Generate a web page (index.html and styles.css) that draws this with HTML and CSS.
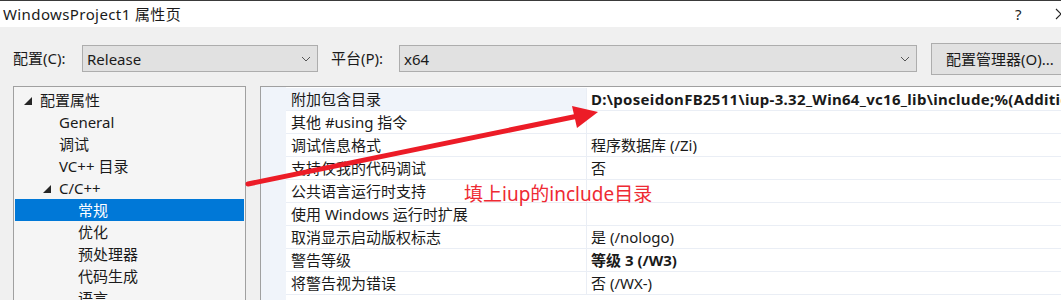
FILE: index.html
```html
<html>
<head>
<title>WindowsProject1 属性页</title>
<link rel="stylesheet" href="styles.css">
</head>
<body>
<div class="window">
  <div class="titlebar">
    <span class="title">WindowsProject1 属性页</span>
    <span class="help">?</span>
    <svg class="close" width="12" height="12" viewBox="0 0 12 12"><path d="M1 1 L11 11 M11 1 L1 11" stroke="#222" stroke-width="1.1" fill="none"/></svg>
  </div>

  <div class="toolbar">
    <span class="label">配置(C):</span>
    <div class="combo combo-config">
      <span>Release</span>
      <svg class="chev" width="10" height="6" viewBox="0 0 10 6"><polyline points="1,1 5,5 9,1" stroke="#555" stroke-width="1" fill="none"/></svg>
    </div>
    <span class="label label-platform">平台(P):</span>
    <div class="combo combo-platform">
      <span>x64</span>
      <svg class="chev" width="10" height="6" viewBox="0 0 10 6"><polyline points="1,1 5,5 9,1" stroke="#555" stroke-width="1" fill="none"/></svg>
    </div>
    <button class="btn">配置管理器(O)...</button>
  </div>

  <div class="panes">
    <ul class="tree">
      <li class="lvl0"><i class="tri"></i>配置属性</li>
      <li class="lvl1">General</li>
      <li class="lvl1">调试</li>
      <li class="lvl1">VC++ 目录</li>
      <li class="lvl1"><i class="tri"></i>C/C++</li>
      <li class="lvl2 selected">常规</li>
      <li class="lvl2">优化</li>
      <li class="lvl2">预处理器</li>
      <li class="lvl2">代码生成</li>
      <li class="lvl2">语言</li>
    </ul>

    <div class="grid">
      <div class="row current"><div class="name">附加包含目录</div><div class="value bold path">D:\poseidonFB2511\iup-3.32_Win64_vc16_lib\include;%(AdditionalIncludeDirectories)</div></div>
      <div class="row"><div class="name">其他 #using 指令</div><div class="value"></div></div>
      <div class="row"><div class="name">调试信息格式</div><div class="value">程序数据库 (/Zi)</div></div>
      <div class="row"><div class="name">支持仅我的代码调试</div><div class="value">否</div></div>
      <div class="row"><div class="name">公共语言运行时支持</div><div class="value"></div></div>
      <div class="row"><div class="name">使用 Windows 运行时扩展</div><div class="value"></div></div>
      <div class="row"><div class="name">取消显示启动版权标志</div><div class="value">是 (/nologo)</div></div>
      <div class="row"><div class="name">警告等级</div><div class="value bold">等级 3 (/W3)</div></div>
      <div class="row"><div class="name">将警告视为错误</div><div class="value">否 (/WX-)</div></div>
    </div>
  </div>

  <!-- red annotation drawn over the dialog -->
  <svg class="arrow" width="1061" height="300" viewBox="0 0 1061 300">
    <line x1="248" y1="184" x2="578" y2="116" stroke="#ec1c27" stroke-width="5" stroke-linecap="round"/>
    <polygon points="598,112 572,106 577,128" fill="#ec1c27"/>
  </svg>
  <div class="note">填上iup的include目录</div>
</div>
</body>
</html>
```

FILE: styles.css
```css
html,body {margin:0; padding:0; width:1061px; height:300px; overflow:hidden; background:#f0f0f0;}
body {font:15px/22px "Noto Sans", "Noto Sans CJK SC", sans-serif; color:#1a1a1a;}

.window {position:relative; width:1061px; height:300px; overflow:hidden;}

.titlebar {display:flex; align-items:center; height:26px; background:#fff; border-top:1px solid #3a3a3a;}
.title {margin-left:3px; flex:1; white-space:nowrap; letter-spacing:0.4px;}
.help {width:12px; margin-right:28px; color:#222;}
.close {margin-right:-6px; flex-shrink:0;}

.toolbar {display:flex; align-items:flex-start; height:59px; box-sizing:border-box; padding:18px 0 0 13px;}
.toolbar > * {flex-shrink:0;}
.label {width:69px; line-height:27px; white-space:nowrap;}
.label-platform {width:68px; margin-left:13px;}
.combo {display:flex; align-items:center; justify-content:space-between; height:27px; box-sizing:border-box; padding:0 6px 0 4px; background:#e1e1e1; border:1px solid #adadad;}
.combo-config {width:236px;}
.combo-platform {width:518px;}
.chev {margin-top:1px;}
.btn {height:32px; width:150px; margin:-2px 0 0 14px; padding:0 0 0 14px; text-align:left; background:#e1e1e1; border:1px solid #adadad; font:inherit; color:#1a1a1a; white-space:nowrap;}

.panes {display:flex; align-items:flex-start;}
.tree {flex-shrink:0; width:233px; height:240px; box-sizing:border-box; margin:0 0 0 13px; padding:2px 1px 0; list-style:none; background:#f5f5f5; border:1px solid #a0a0a0;}
.tree li {height:22px; line-height:22px; white-space:nowrap;}
.tree .lvl0 {padding-left:25px;}
.tree .lvl1 {padding-left:44px;}
.tree .lvl2 {padding-left:63px;}
.tree li.selected {background:#0078d7; color:#fff;}
.tri {display:inline-block; width:0; height:0; margin:0 8px 0 -16px; border-style:solid; border-width:0 0 8px 8px; border-color:transparent transparent #262626 transparent; vertical-align:1px;}

.grid {flex:1; min-width:0; height:240px; margin-left:14px; padding-top:1px; background:#fff; border-left:1px solid #a0a0a0; border-top:1px solid #a0a0a0; box-shadow:inset 25px 0 0 #f0f4fa;}
.row {display:flex; height:23px; box-sizing:border-box; margin-left:25px; border-bottom:1px solid #eaeef5;}
.name {flex-shrink:0; width:301px; box-sizing:border-box; padding-left:5px; border-right:1px solid #eaeef5; white-space:nowrap; overflow:hidden;}
.row.current .name {background:#f0f4fa;}
.value {flex:1; min-width:0; padding-left:4px; white-space:nowrap; overflow:hidden;}
.bold {font-weight:bold;}
.path {letter-spacing:0.3px;}

.arrow {position:absolute; left:0; top:0;}
.note {position:absolute; left:464px; top:182px; font-size:19px; line-height:24px; color:#ee2a33; white-space:nowrap;}
```
